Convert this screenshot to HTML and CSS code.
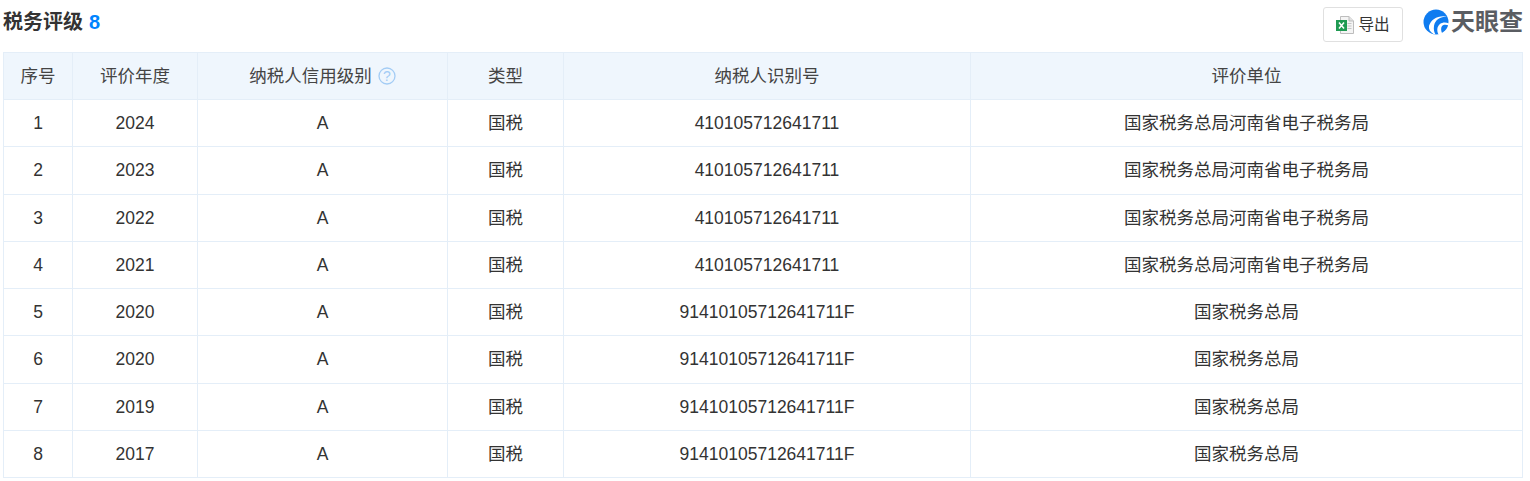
FILE: index.html
```html
<!DOCTYPE html>
<html lang="zh">
<head>
<meta charset="utf-8">
<title>税务评级</title>
<link rel="stylesheet" href="styles.css">
</head>
<body>
<div class="head">
  <div class="title">税务评级<span class="count">8</span></div>
  <div class="tools">
    <button class="export">
      <svg class="xls" width="18" height="18" viewBox="0 0 18 18">
        <path d="M4.500 .5h8.500l4.500 4.500v12.500h-13z" fill="#f4f4f4" stroke="#bdbdbd"/>
        <path d="M13 .5v4.500h4.500" fill="#e2e2e2" stroke="#bdbdbd"/>
        <path d="M11.500 7.500h4M11.500 10h4M11.500 12.500h4" stroke="#c4c4c4"/>
        <rect x="0" y="4" width="11" height="11" fill="#1f9a52"/>
        <path d="M3 6.500l5 6M8 6.500l-5 6" stroke="#fff" stroke-width="1.500"/>
      </svg>
      <span>导出</span>
    </button>
    <div class="logo">
      <svg width="26" height="26" viewBox="0 0 26 26">
        <circle cx="13" cy="13" r="12.500" fill="#0f7cf0"/>
        <path d="M6 17C8 10 15 6 24 7.500 17 7.500 12 11 11 17c-.5 3 0 6 1.500 8.500L10.500 25C7 23 5.500 20 6 17z" fill="#fff"/>
        <path d="M15.500 25.500c-2-4-1.500-8 1.500-10.500 2.500-2 6-2 9-.5v2c-3-1-5.500-1-7 .5-1.500 2-1 5.500 .5 8z" fill="#fff"/>
      </svg>
      <span class="word">天眼查</span>
    </div>
  </div>
</div>
<table>
  <colgroup>
    <col class="c1"><col class="c2"><col class="c3"><col class="c4"><col class="c5"><col>
  </colgroup>
  <thead>
    <tr><th>序号</th><th>评价年度</th><th>纳税人信用级别<svg class="help" width="18" height="18" viewBox="0 0 18 18"><circle cx="9" cy="9" r="8" fill="none" stroke="#a3ccf5" stroke-width="1.300"/><text x="9" y="13.500" text-anchor="middle" class="q">?</text></svg></th><th>类型</th><th>纳税人识别号</th><th>评价单位</th></tr>
  </thead>
  <tbody>
    <tr><td>1</td><td>2024</td><td>A</td><td>国税</td><td>410105712641711</td><td>国家税务总局河南省电子税务局</td></tr>
    <tr><td>2</td><td>2023</td><td>A</td><td>国税</td><td>410105712641711</td><td>国家税务总局河南省电子税务局</td></tr>
    <tr><td>3</td><td>2022</td><td>A</td><td>国税</td><td>410105712641711</td><td>国家税务总局河南省电子税务局</td></tr>
    <tr><td>4</td><td>2021</td><td>A</td><td>国税</td><td>410105712641711</td><td>国家税务总局河南省电子税务局</td></tr>
    <tr><td>5</td><td>2020</td><td>A</td><td>国税</td><td>91410105712641711F</td><td>国家税务总局</td></tr>
    <tr><td>6</td><td>2020</td><td>A</td><td>国税</td><td>91410105712641711F</td><td>国家税务总局</td></tr>
    <tr><td>7</td><td>2019</td><td>A</td><td>国税</td><td>91410105712641711F</td><td>国家税务总局</td></tr>
    <tr><td>8</td><td>2017</td><td>A</td><td>国税</td><td>91410105712641711F</td><td>国家税务总局</td></tr>
  </tbody>
</table>
</body>
</html>
```
FILE: styles.css
```css
* { box-sizing: border-box; }
html, body { margin: 0; background: #fff; }
body {
  padding: 0 7px 0 3px;
  font-family: "Liberation Sans", "Noto Sans CJK SC", sans-serif;
  color: #333;
  overflow: hidden;
}
.head {
  display: flex;
  justify-content: space-between;
  align-items: flex-start;
  height: 52px;
}
.title {
  font-size: 20px;
  font-weight: 700;
  line-height: 24px;
  margin-top: 10px;
}
.count { color: #0084ff; margin-left: 6px; }
.tools { display: flex; align-items: flex-start; }
.export {
  display: flex;
  align-items: center;
  justify-content: center;
  gap: 4px;
  width: 80px;
  height: 35px;
  margin-top: 7px;
  padding: 0;
  background: #fff;
  border: 1px solid #e0e0e0;
  border-radius: 3px;
  color: #333;
  font: 15.600px/20px "Liberation Sans", "Noto Sans CJK SC", sans-serif;
}
.logo {
  display: flex;
  align-items: center;
  gap: 2px;
  margin: 9px 0 0 20px;
  width: 100px;
}
.word {
  font-size: 24px;
  font-weight: 700;
  line-height: 26px;
  color: #5a5d62;
  white-space: nowrap;
}
table {
  width: 1520px;
  table-layout: fixed;
  border-collapse: collapse;
  font-size: 17.500px;
  line-height: 24px;
  text-align: center;
}
.c1 { width: 69px; }
.c2 { width: 125px; }
.c3 { width: 250px; }
.c4 { width: 116px; }
.c5 { width: 407px; }
th, td {
  border: 1px solid #e4eef8;
  height: 47.250px;
  padding: 0;
  font-weight: 400;
}
th { height: 47px; background: #eff6fd; color: #444; }
.help { margin-left: 6px; vertical-align: -3px; }
.q { font-size: 14px; fill: #a3ccf5; }
```
